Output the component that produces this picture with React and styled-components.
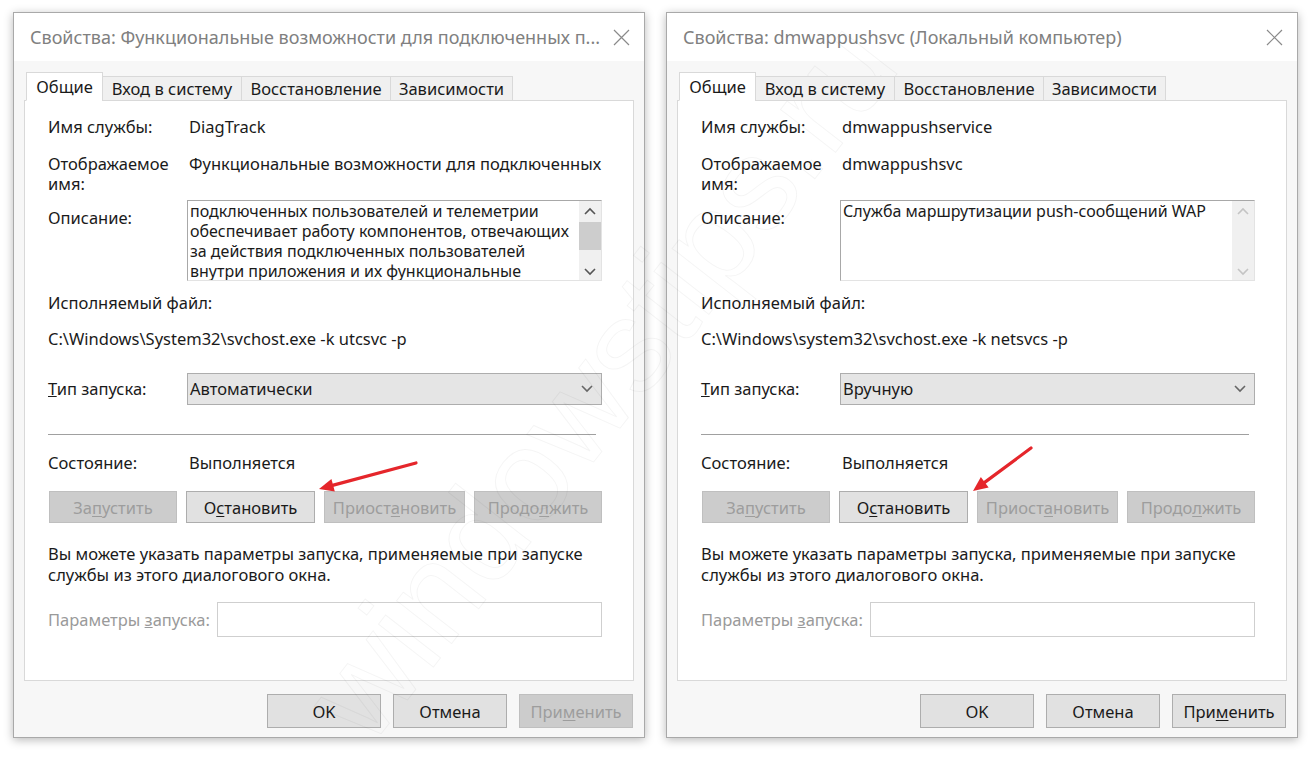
import React from 'react';
import styled, { createGlobalStyle } from 'styled-components';

const GlobalStyle = createGlobalStyle`
  html, body {
    margin: 0;
    padding: 0;
    background: #ffffff;
  }
  body {
    font-family: "Noto Sans", "Open Sans", sans-serif;
    color: #1a1a1a;
  }
`;

// page holding both property dialogs side by side
const Page = styled.div`
  position: relative;
  width: 1312px;
  height: 761px;
  box-sizing: border-box;
  padding: 12px 0 0 13px;
  display: flex;
  gap: 21px;
  overflow: hidden;
`;

const Dialog = styled.div`
  position: relative;
  width: 632px;
  height: 726px;
  box-sizing: border-box;
  background: #f7f7f7;
  border: 1px solid #a9a9a9;
  box-shadow: 0 2px 9px rgba(0, 0, 0, 0.28);
  display: flex;
  flex-direction: column;
`;

const TitleBar = styled.div`
  height: 48px;
  flex: none;
  display: flex;
  align-items: center;
  justify-content: space-between;
  padding: 0 14px 0 16px;
  background: #ffffff;
`;

const Title = styled.div`
  font-size: 18px;
  color: #808080;
  white-space: nowrap;
`;

const CloseIcon = styled.svg`
  width: 17px;
  height: 17px;
  flex: none;
`;

const Body = styled.div`
  flex: 1;
  display: flex;
  flex-direction: column;
  padding: 10px;
`;

const Tabs = styled.div`
  display: flex;
  align-items: flex-end;
  height: 29px;
  padding-left: 2px;
  position: relative;
  z-index: 1;
`;

const Tab = styled.div`
  width: ${p => p.$w}px;
  height: ${p => (p.$active ? '29px' : '25px')};
  box-sizing: border-box;
  display: flex;
  align-items: center;
  justify-content: center;
  font-size: 16.5px;
  background: ${p => (p.$active ? '#ffffff' : '#f0f0f0')};
  border: 1px solid #d9d9d9;
  border-bottom: ${p => (p.$active ? '1px solid #ffffff' : '1px solid #d9d9d9')};
  margin-left: ${p => (p.$first ? '0' : '-1px')};
  margin-bottom: -1px;
  white-space: nowrap;
  color: #1a1a1a;
`;

const Panel = styled.div`
  height: 581px;
  box-sizing: border-box;
  background: #ffffff;
  border: 1px solid #d9d9d9;
  padding: 16px 31px 0 23px;
  display: flex;
  flex-direction: column;
  font-size: 16.5px;
`;

const Row = styled.div`
  display: grid;
  grid-template-columns: 139px 1fr;
  align-items: ${p => p.$align || 'start'};
  margin-top: ${p => p.$mt || 0}px;
  line-height: 20px;
`;

const Label = styled.div`
  flex: none;
  color: ${p => (p.$disabled ? '#9a9a9a' : '#1a1a1a')};
  padding-top: ${p => p.$pt || 0}px;
  white-space: nowrap;
`;

const Value = styled.div`
  padding-left: 2px;
  white-space: nowrap;
  overflow: ${p => (p.$clip ? 'hidden' : 'visible')};
`;

const Line = styled.div`
  margin-top: ${p => p.$mt || 0}px;
  line-height: ${p => p.$lh || 20}px;
  white-space: nowrap;
`;

const DescBox = styled.div`
  height: 81px;
  box-sizing: border-box;
  border: 1px solid #a8a8a8;
  border-right-color: #e3e3e3;
  border-bottom-color: #e3e3e3;
  display: flex;
  overflow: hidden;
`;

const DescText = styled.div`
  flex: 1;
  padding: 0 2px;
  font-size: 16px;
  line-height: 20px;
  white-space: nowrap;
  overflow: hidden;
`;

const ScrollBar = styled.div`
  width: 22px;
  flex: none;
  background: #f0f0f0;
  display: flex;
  flex-direction: column;
  align-items: center;
  justify-content: space-between;
  padding: 6px 0 4px;
  box-sizing: border-box;
`;

const Thumb = styled.div`
  width: 22px;
  height: 28px;
  background: #cdcdcd;
  margin-top: -12px;
`;

const Combo = styled.div`
  height: 32px;
  box-sizing: border-box;
  background: #e5e5e5;
  border: 1px solid #adadad;
  display: flex;
  align-items: center;
  justify-content: space-between;
  padding: 0 8px 0 2px;
`;

const Separator = styled.div`
  height: 1px;
  background: #a0a0a0;
  margin: 29px 6px 0 0;
`;

const ButtonRow = styled.div`
  display: flex;
  gap: 9px;
  margin-top: 18px;
  padding-left: 1px;
`;

const Button = styled.div`
  width: ${p => p.$w || 114}px;
  height: ${p => p.$h || 32}px;
  box-sizing: border-box;
  display: flex;
  align-items: center;
  justify-content: center;
  font-size: 16.5px;
  background: ${p => (p.$disabled ? '#cccccc' : '#e1e1e1')};
  border: 1px solid ${p => (p.$disabled ? '#bfbfbf' : '#adadad')};
  color: ${p => (p.$disabled ? '#9d9d9d' : '#1a1a1a')};
  white-space: nowrap;
  u {
    text-decoration-thickness: 1px;
    text-underline-offset: 2px;
  }
`;

const ParamRow = styled.div`
  display: flex;
  align-items: center;
  margin-top: 17px;
`;

const ParamInput = styled.div`
  flex: 1;
  height: 35px;
  margin-left: 7px;
  box-sizing: border-box;
  border: 1px solid #cfcfcf;
  background: #ffffff;
`;

const Footer = styled.div`
  display: flex;
  justify-content: flex-end;
  gap: 12px;
  margin-top: 13px;
  padding-right: 1px;
`;

const Overlay = styled.svg`
  position: absolute;
  left: 0;
  top: 0;
  pointer-events: none;
`;

const Watermark = styled.div`
  position: absolute;
  left: 600px;
  top: 380px;
  transform: translate(-50%, -50%) rotate(-52deg);
  font-family: "Liberation Sans", sans-serif;
  font-size: 132px;
  color: transparent;
  -webkit-text-stroke: 1px rgba(0, 0, 0, 0.045);
  white-space: nowrap;
  pointer-events: none;
`;

const Chevron = ({ up, color = '#555' }) => (
  <svg width="12" height="8" viewBox="0 0 12 8">
    <path
      d={up ? 'M1 7 L6 2 L11 7' : 'M1 1 L6 6 L11 1'}
      fill="none"
      stroke={color}
      strokeWidth="1.6"
    />
  </svg>
);

const Arrow = ({ x1, y1, x2, y2 }) => {
  const ang = Math.atan2(y2 - y1, x2 - x1);
  const len = 16;
  const spread = 0.42;
  const ax = x2 - len * Math.cos(ang - spread);
  const ay = y2 - len * Math.sin(ang - spread);
  const bx = x2 - len * Math.cos(ang + spread);
  const by = y2 - len * Math.sin(ang + spread);
  const sx = x2 - 12 * Math.cos(ang);
  const sy = y2 - 12 * Math.sin(ang);
  return (
    <Overlay width="632" height="726">
      <path d={`M${x1} ${y1} L${sx} ${sy}`} stroke="#e5262b" strokeWidth="3.2" strokeLinecap="round" />
      <path d={`M${x2} ${y2} L${ax} ${ay} L${bx} ${by} Z`} fill="#e5262b" />
    </Overlay>
  );
};

function ServiceDialog({ title, name, display, description, scrollable, path, startup, applyEnabled, arrow }) {
  return (
    <Dialog>
      <TitleBar>
        <Title>{title}</Title>
        <CloseIcon viewBox="0 0 17 17">
          <path d="M1 1 L16 16 M16 1 L1 16" stroke="#8a8a8a" strokeWidth="1.2" />
        </CloseIcon>
      </TitleBar>
      <Body>
        <Tabs>
          <Tab $active $first $w={77}>Общие</Tab>
          <Tab $w={140}>Вход в систему</Tab>
          <Tab $w={150}>Восстановление</Tab>
          <Tab $w={123}>Зависимости</Tab>
        </Tabs>
        <Panel>
          <Row>
            <Label>Имя службы:</Label>
            <Value>{name}</Value>
          </Row>
          <Row $mt={17}>
            <Label>Отображаемое<br />имя:</Label>
            <Value $clip>{display}</Value>
          </Row>
          <Row $mt={6}>
            <Label $pt={8}>Описание:</Label>
            <DescBox>
              <DescText>
                {description.map(l => (
                  <div key={l}>{l}</div>
                ))}
              </DescText>
              <ScrollBar>
                <Chevron up color={scrollable ? '#555' : '#c4c4c4'} />
                {scrollable && <Thumb />}
                <Chevron color={scrollable ? '#555' : '#c4c4c4'} />
              </ScrollBar>
            </DescBox>
          </Row>
          <Line $mt={12}>Исполняемый файл:</Line>
          <Line $mt={16}>{path}</Line>
          <Row $mt={24} $align="center">
            <Label><u>Т</u>ип запуска:</Label>
            <Combo>
              <span>{startup}</span>
              <Chevron color="#666" />
            </Combo>
          </Row>
          <Separator />
          <Row $mt={18}>
            <Label>Состояние:</Label>
            <Value>Выполняется</Value>
          </Row>
          <ButtonRow>
            <Button $w={128} $disabled>За<u>п</u>устить</Button>
            <Button $w={129}>О<u>с</u>тановить</Button>
            <Button $w={141} $disabled>Приост<u>а</u>новить</Button>
            <Button $w={128} $disabled>Продо<u>л</u>жить</Button>
          </ButtonRow>
          <Line $mt={20} $lh={21}>Вы можете указать параметры запуска, применяемые при запуске</Line>
          <Line $lh={21}>службы из этого диалогового окна.</Line>
          <ParamRow>
            <Label $disabled>Параметры <u>з</u>апуска:</Label>
            <ParamInput />
          </ParamRow>
        </Panel>
        <Footer>
          <Button $h={34}>OK</Button>
          <Button $h={34}>Отмена</Button>
          <Button $h={34} $disabled={!applyEnabled}>При<u>м</u>енить</Button>
        </Footer>
      </Body>
      <Arrow {...arrow} />
    </Dialog>
  );
}

export default function App() {
  return (
    <>
      <GlobalStyle />
      <Page>
        <ServiceDialog
          title="Свойства: Функциональные возможности для подключенных п..."
          name="DiagTrack"
          display="Функциональные возможности для подключенных г"
          description={[
            'подключенных пользователей и телеметрии',
            'обеспечивает работу компонентов, отвечающих',
            'за действия подключенных пользователей',
            'внутри приложения и их функциональные',
          ]}
          scrollable
          path="C:\Windows\System32\svchost.exe -k utcsvc -p"
          startup="Автоматически"
          applyEnabled={false}
          arrow={{ x1: 402, y1: 450, x2: 305, y2: 476 }}
        />
        <ServiceDialog
          title="Свойства: dmwappushsvc (Локальный компьютер)"
          name="dmwappushservice"
          display="dmwappushsvc"
          description={['Служба маршрутизации push-сообщений WAP']}
          scrollable={false}
          path="C:\Windows\system32\svchost.exe -k netsvcs -p"
          startup="Вручную"
          applyEnabled
          arrow={{ x1: 364, y1: 435, x2: 306, y2: 478 }}
        />
        <Watermark>windowstips.ru</Watermark>
      </Page>
    </>
  );
}
